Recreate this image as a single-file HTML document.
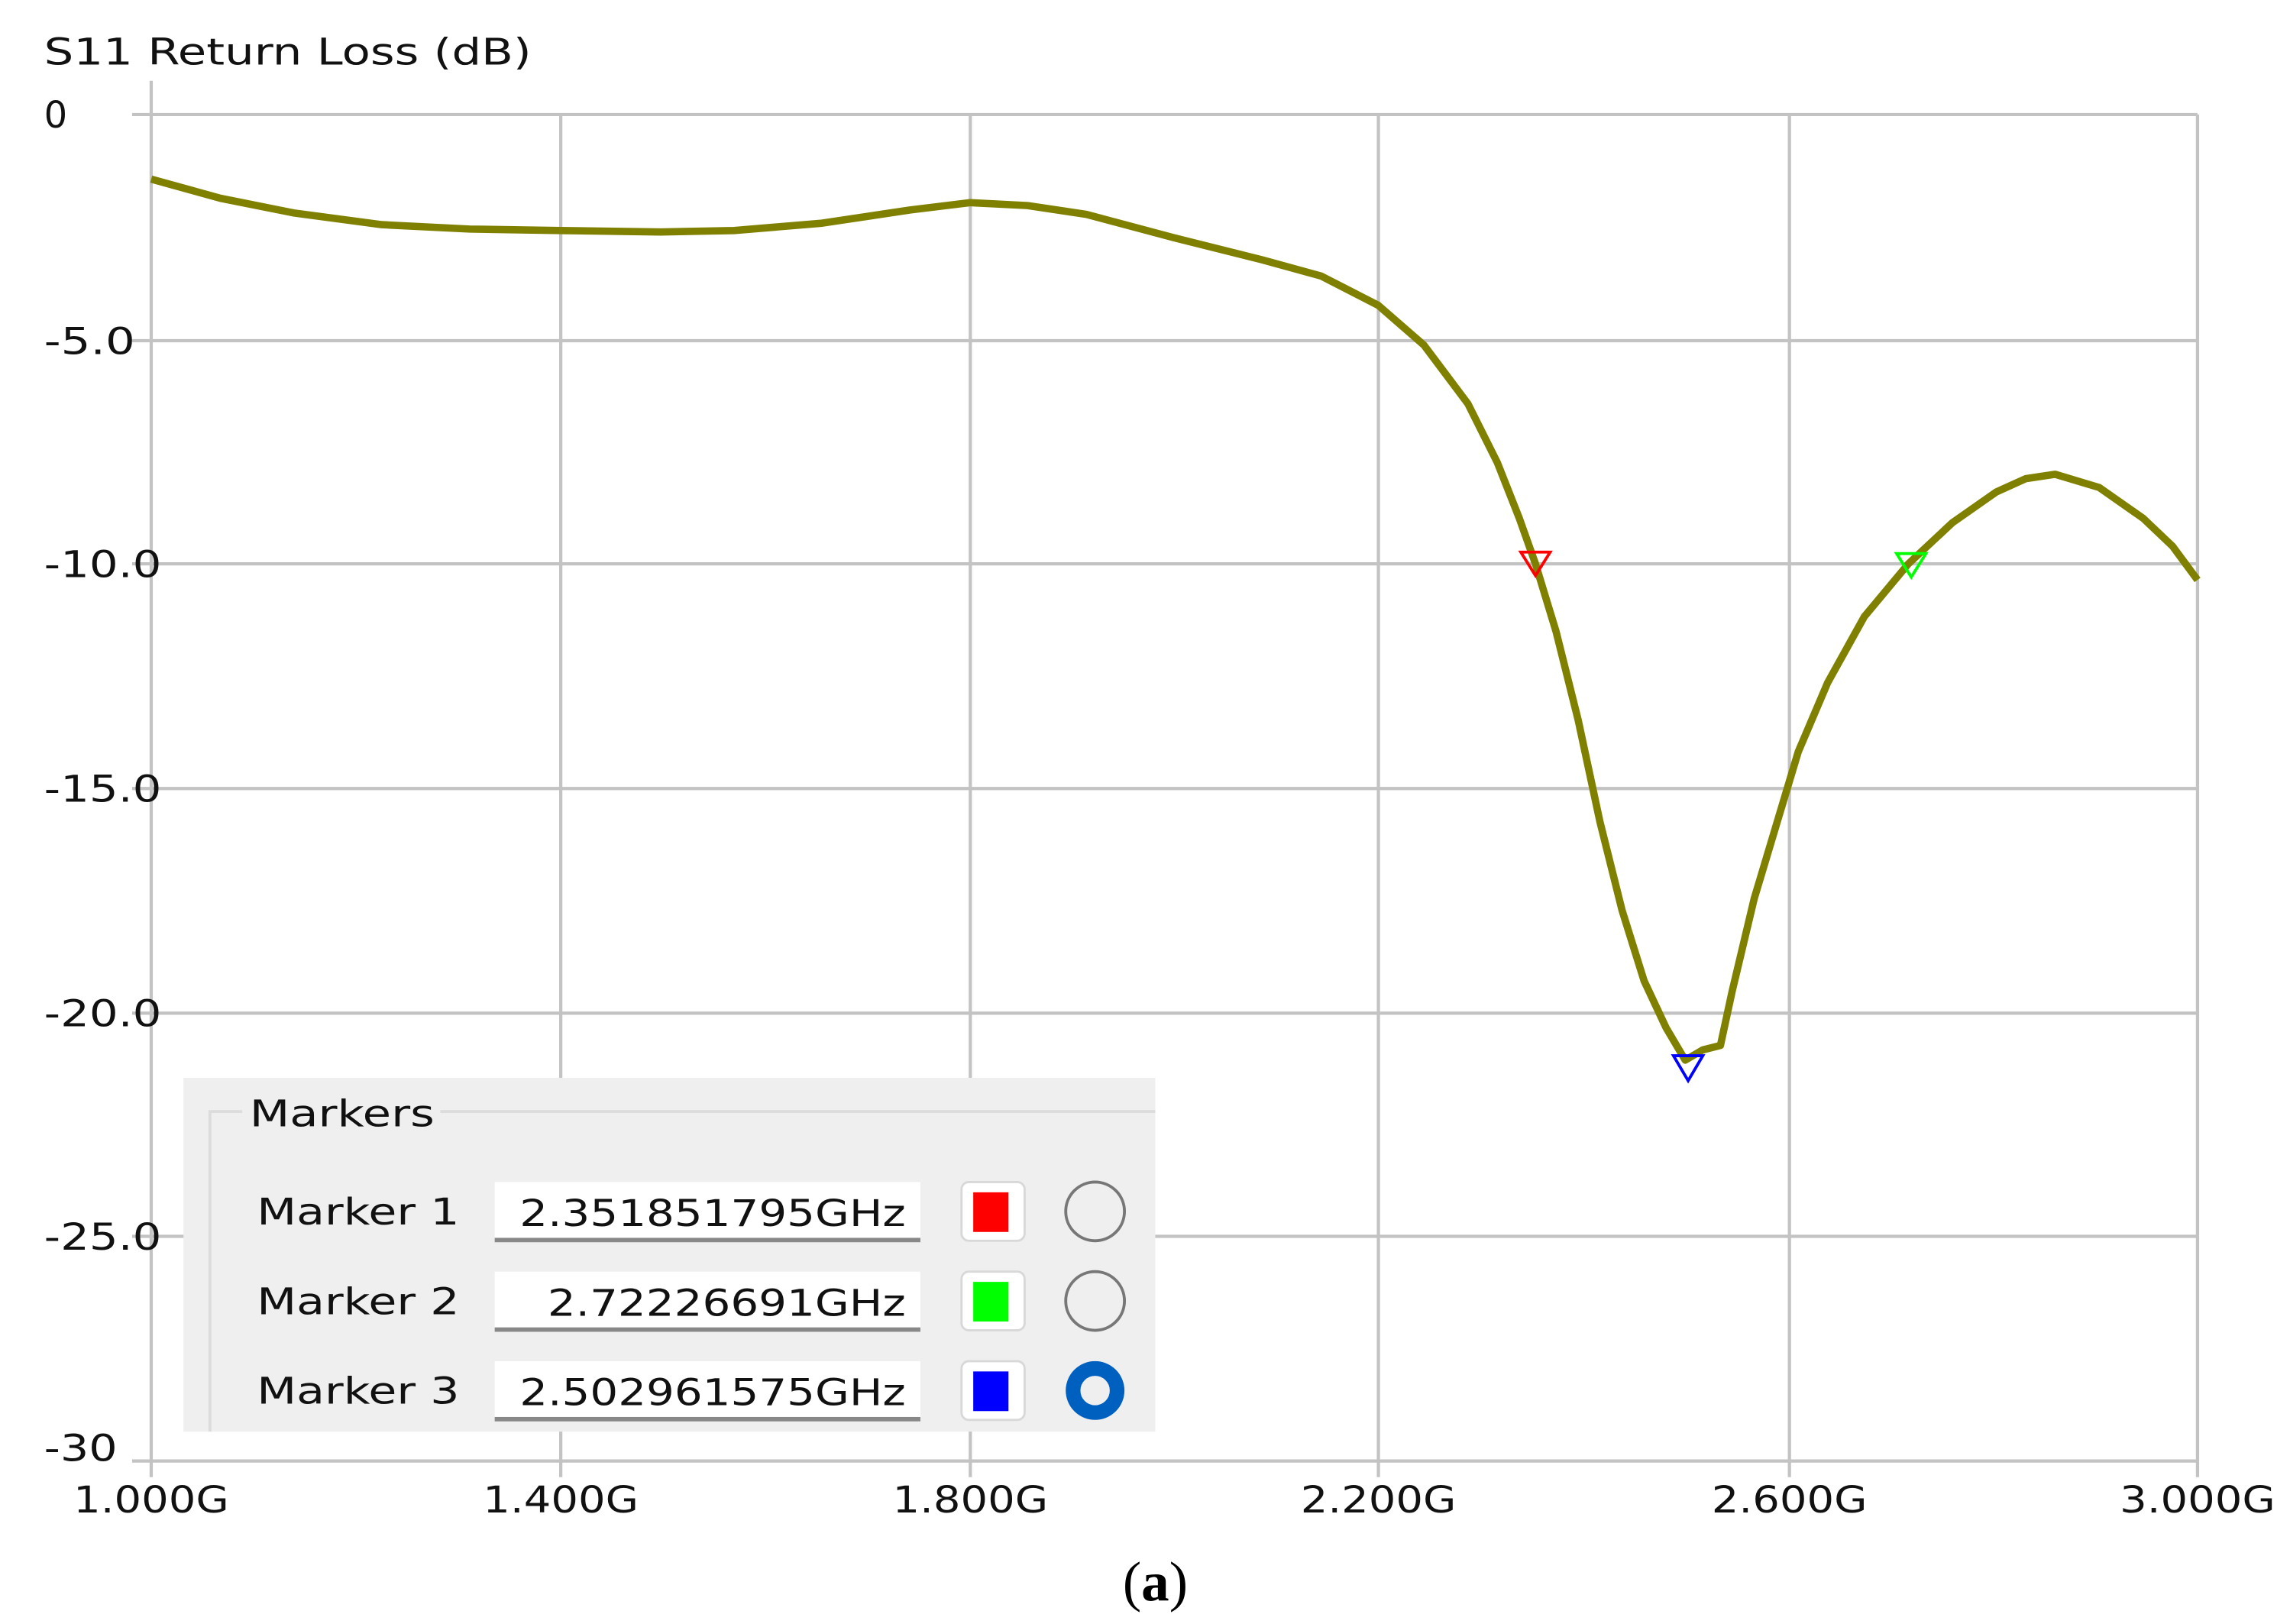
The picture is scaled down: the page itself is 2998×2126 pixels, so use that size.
<!DOCTYPE html>
<html><head><meta charset="utf-8"><style>
html,body{margin:0;padding:0;background:#fff;}
svg{display:block;}
</style></head><body>
<svg width="2998" height="2126" viewBox="0 0 1560 1106" preserveAspectRatio="none" xmlns="http://www.w3.org/2000/svg">
<rect width="1560" height="1106" fill="#fff"/>
<g stroke="#c3c3c3" stroke-width="2.2" fill="none">
<line x1="103" y1="55" x2="103" y2="1006"/>
<line x1="382" y1="78" x2="382" y2="1006"/>
<line x1="661" y1="78" x2="661" y2="1006"/>
<line x1="939" y1="78" x2="939" y2="1006"/>
<line x1="1219" y1="78" x2="1219" y2="1006"/>
<line x1="1497" y1="78" x2="1497" y2="1006"/>
<line x1="90" y1="78" x2="1497" y2="78"/>
<line x1="90" y1="232" x2="1497" y2="232"/>
<line x1="90" y1="384" x2="1497" y2="384"/>
<line x1="90" y1="537" x2="1497" y2="537"/>
<line x1="90" y1="690" x2="1497" y2="690"/>
<line x1="90" y1="842" x2="1497" y2="842"/>
<line x1="90" y1="995" x2="1497" y2="995"/>
</g>
<g font-family="'DejaVu Sans', sans-serif" font-size="25" fill="#111">
<text x="30" y="44" textLength="332" lengthAdjust="spacingAndGlyphs">S11 Return Loss (dB)</text>
<text x="30" y="87">0</text>
<text x="30" y="241" textLength="62" lengthAdjust="spacingAndGlyphs">-5.0</text>
<text x="30" y="393" textLength="80" lengthAdjust="spacingAndGlyphs">-10.0</text>
<text x="30" y="546" textLength="80" lengthAdjust="spacingAndGlyphs">-15.0</text>
<text x="30" y="699" textLength="80" lengthAdjust="spacingAndGlyphs">-20.0</text>
<text x="30" y="851" textLength="80" lengthAdjust="spacingAndGlyphs">-25.0</text>
<text x="30" y="995" textLength="50" lengthAdjust="spacingAndGlyphs">-30</text>
<g text-anchor="middle">
<text x="103" y="1030" textLength="106" lengthAdjust="spacingAndGlyphs">1.000G</text>
<text x="382" y="1030" textLength="106" lengthAdjust="spacingAndGlyphs">1.400G</text>
<text x="661" y="1030" textLength="106" lengthAdjust="spacingAndGlyphs">1.800G</text>
<text x="939" y="1030" textLength="106" lengthAdjust="spacingAndGlyphs">2.200G</text>
<text x="1219" y="1030" textLength="106" lengthAdjust="spacingAndGlyphs">2.600G</text>
<text x="1497" y="1030" textLength="106" lengthAdjust="spacingAndGlyphs">3.000G</text>
</g>
</g>
<path d="M103,122 L150,135 L200,145 L260,153 L320,156 L382,157 L450,158 L500,157 L560,152 L620,143 L661,138 L700,140 L740,146 L800,162 L860,177 L900,188 L939,208 L970,235 L1000,275 L1020,315 L1035,353 L1046,384 L1060,430 L1075,490 L1090,560 L1105,620 L1120,668 L1135,700 L1148,722 L1160,715 L1172,712 L1180,675 L1195,612 L1210,562 L1225,512 L1245,465 L1270,420 L1300,384 L1330,356 L1360,335 L1380,326 L1400,323 L1430,332 L1460,353 L1480,372 L1497,395" fill="none" stroke="#808000" stroke-width="5" stroke-linejoin="round"/>
<path d="M1036,376 L1056,376 L1046,392 Z" fill="none" stroke="#ff0000" stroke-width="2"/>
<path d="M1292,377 L1312,377 L1302,393 Z" fill="none" stroke="#00ff00" stroke-width="2"/>
<path d="M1140,719 L1160,719 L1150,736 Z" fill="none" stroke="#0000ff" stroke-width="2"/>
<rect x="125" y="734" width="662" height="241" fill="#efefef"/>
<path d="M143,975 L143,757 L165,757 M300,757 L787,757" stroke="#dcdcdc" stroke-width="2" fill="none"/>
<g font-family="'DejaVu Sans', sans-serif" font-size="25" fill="#111">
<text x="170" y="767" textLength="126" lengthAdjust="spacingAndGlyphs">Markers</text>
<text x="175" y="834" textLength="138" lengthAdjust="spacingAndGlyphs">Marker 1</text>
<text x="175" y="895" textLength="138" lengthAdjust="spacingAndGlyphs">Marker 2</text>
<text x="175" y="956" textLength="138" lengthAdjust="spacingAndGlyphs">Marker 3</text>
</g>
<g>
<rect x="337" y="805" width="290" height="40" fill="#fff"/><rect x="337" y="843" width="290" height="3" fill="#888"/>
<rect x="337" y="866" width="290" height="40" fill="#fff"/><rect x="337" y="904" width="290" height="3" fill="#888"/>
<rect x="337" y="927" width="290" height="40" fill="#fff"/><rect x="337" y="965" width="290" height="3" fill="#888"/>
</g>
<g font-family="'DejaVu Sans', sans-serif" font-size="25" fill="#111" text-anchor="end">
<text x="617" y="835" textLength="263" lengthAdjust="spacingAndGlyphs">2.351851795GHz</text>
<text x="617" y="896" textLength="244" lengthAdjust="spacingAndGlyphs">2.72226691GHz</text>
<text x="617" y="957" textLength="263" lengthAdjust="spacingAndGlyphs">2.502961575GHz</text>
</g>
<g stroke="#d8d8d8" stroke-width="1.5">
<rect x="655" y="805" width="43" height="40" rx="5" fill="#fff"/>
<rect x="655" y="866" width="43" height="40" rx="5" fill="#fff"/>
<rect x="655" y="927" width="43" height="40" rx="5" fill="#fff"/>
</g>
<rect x="663" y="812" width="24" height="27" fill="#ff0000"/>
<rect x="663" y="873" width="24" height="27" fill="#00ff00"/>
<rect x="663" y="934" width="24" height="27" fill="#0000ff"/>
<circle cx="746" cy="825" r="20" fill="none" stroke="#777" stroke-width="2"/>
<circle cx="746" cy="886" r="20" fill="none" stroke="#777" stroke-width="2"/>
<circle cx="746" cy="947" r="15" fill="none" stroke="#0060c0" stroke-width="10"/>
<text x="787" y="1090" text-anchor="middle" font-family="'Liberation Serif', serif" font-size="38" fill="#000">(<tspan font-weight="bold">a</tspan>)</text>
</svg>
</body></html>
